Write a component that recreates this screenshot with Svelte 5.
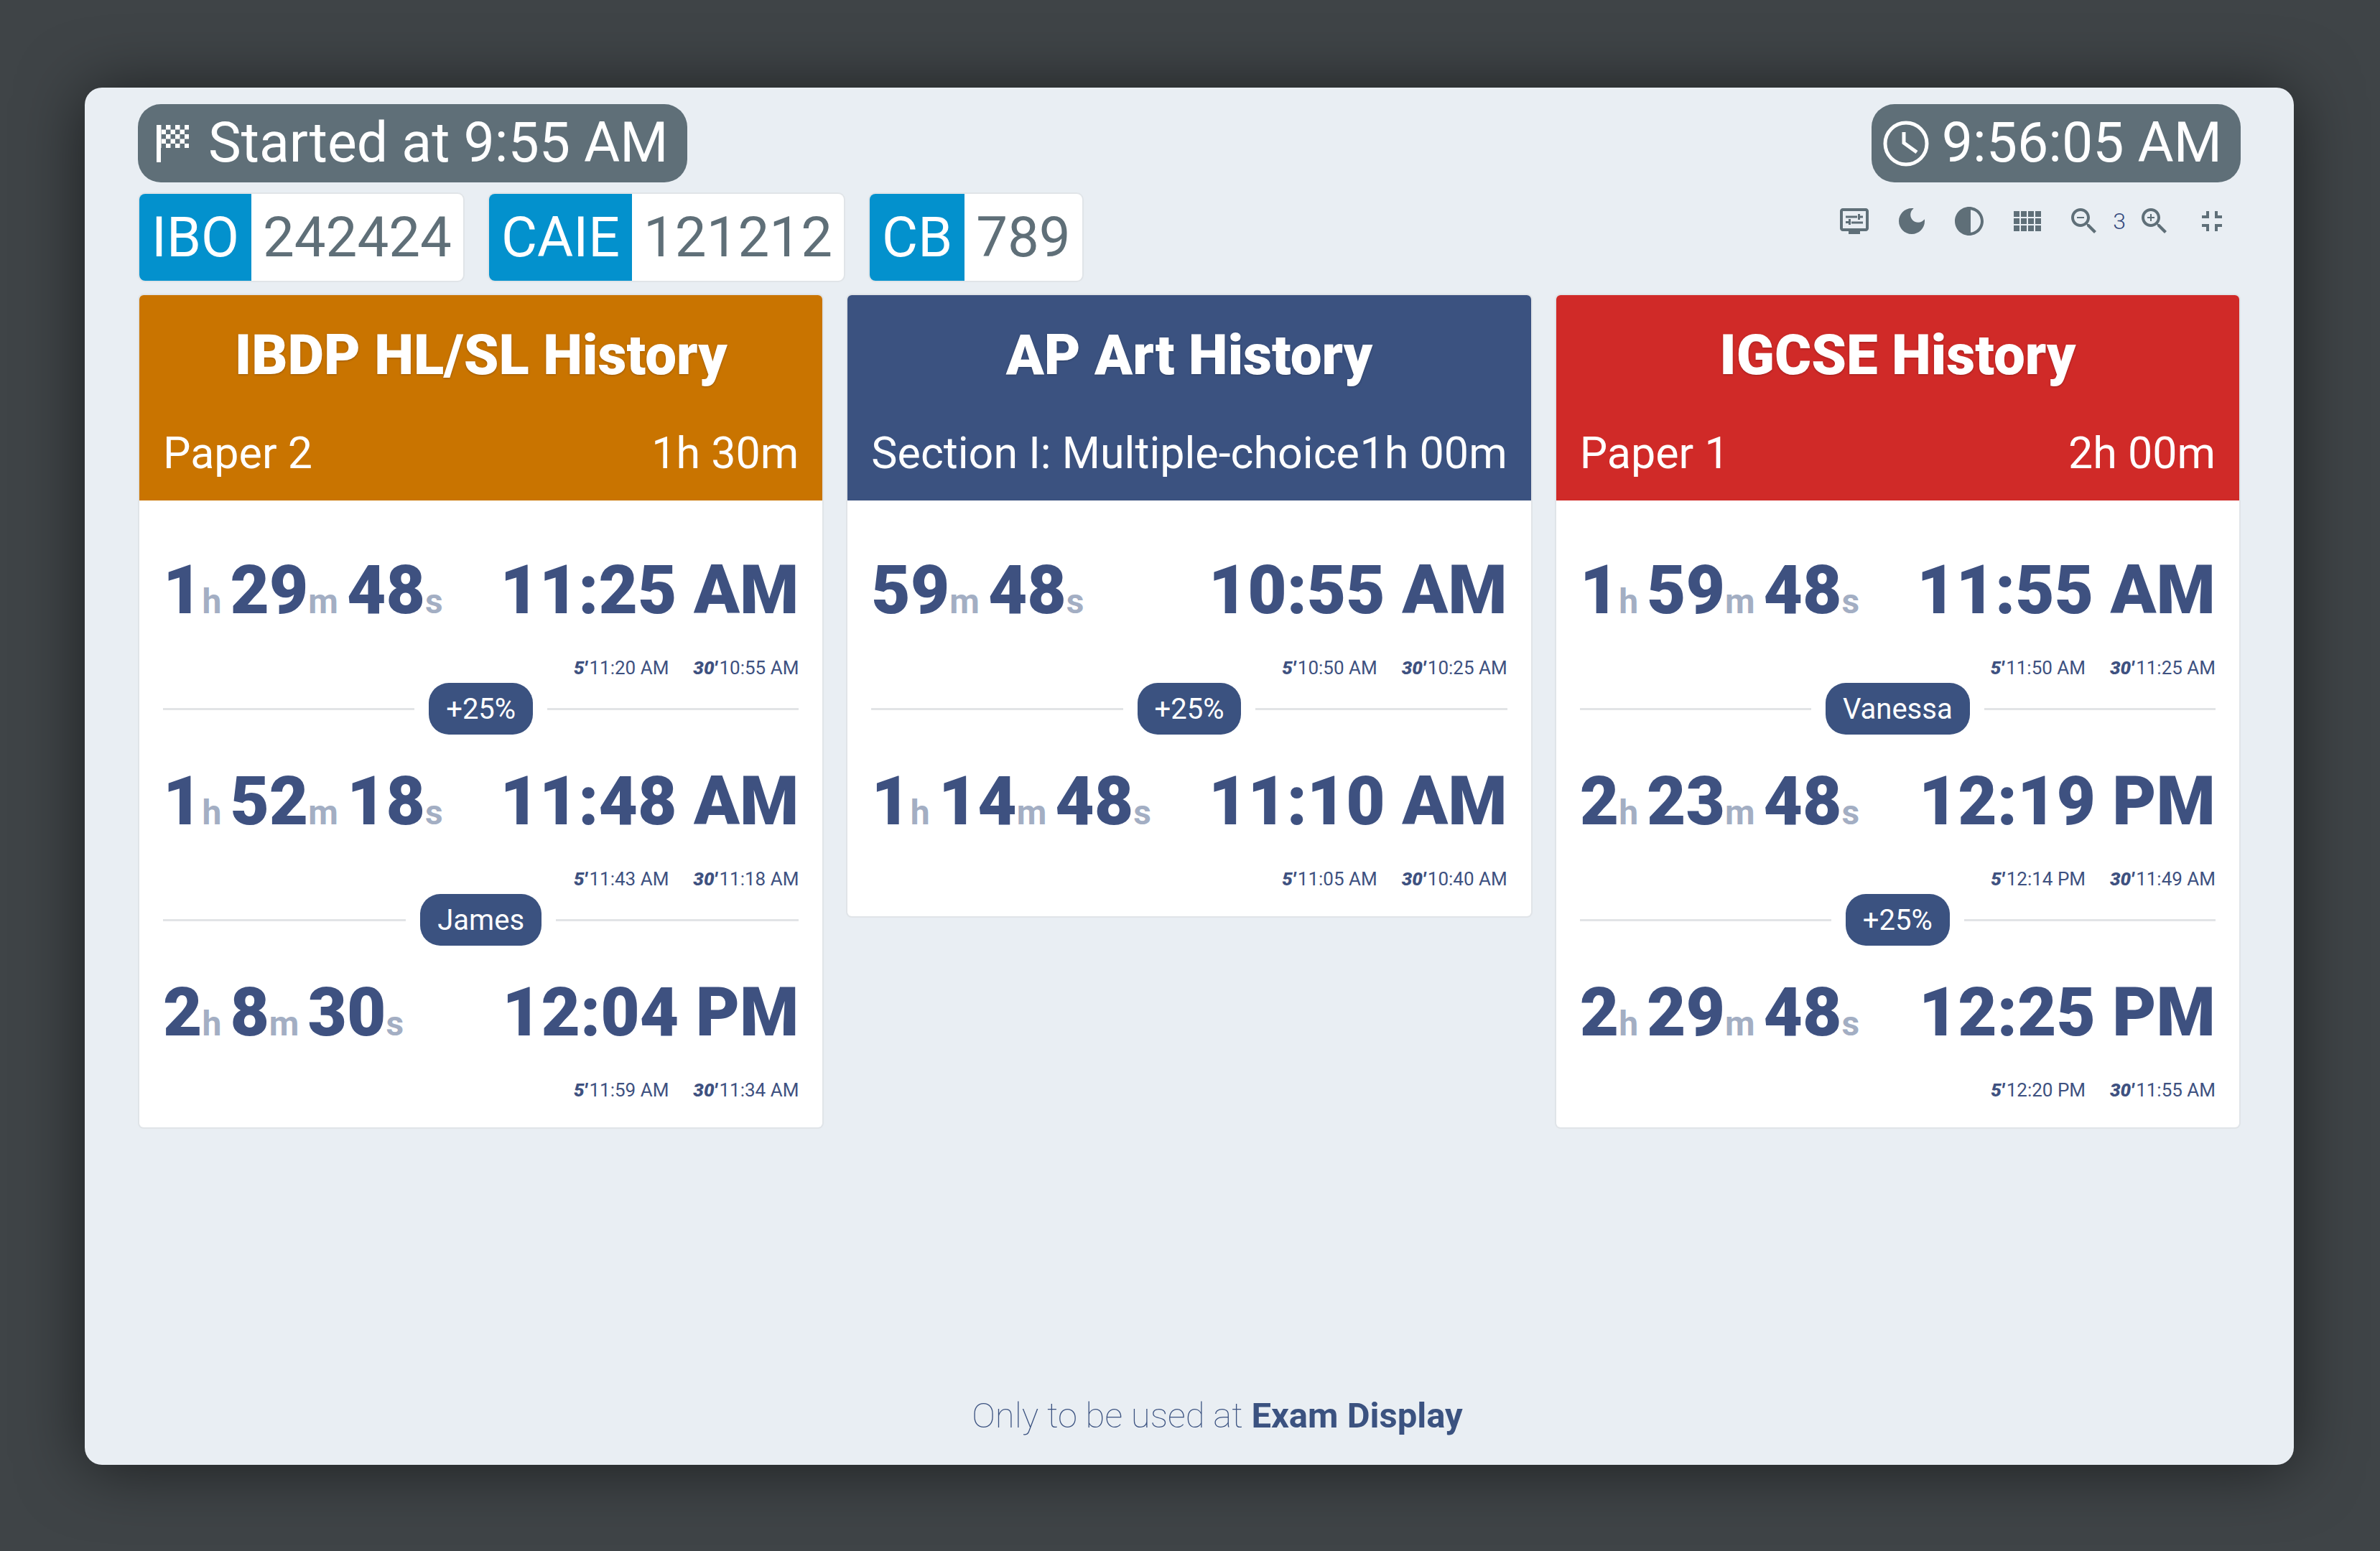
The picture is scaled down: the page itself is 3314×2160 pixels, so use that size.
<script>
  const cards = [
    {
      title: 'IBDP HL/SL History', paper: 'Paper 2', length: '1h 30m', color: '#c97400',
      rows: [
        { t: [['1', 'h'], ['29', 'm'], ['48', 's']], end: '11:25 AM', five: '11:20 AM', thirty: '10:55 AM', tag: '+25%' },
        { t: [['1', 'h'], ['52', 'm'], ['18', 's']], end: '11:48 AM', five: '11:43 AM', thirty: '11:18 AM', tag: 'James' },
        { t: [['2', 'h'], ['8', 'm'], ['30', 's']], end: '12:04 PM', five: '11:59 AM', thirty: '11:34 AM' }
      ]
    },
    {
      title: 'AP Art History', paper: 'Section I: Multiple-choice', length: '1h 00m', color: '#3b5280',
      rows: [
        { t: [['59', 'm'], ['48', 's']], end: '10:55 AM', five: '10:50 AM', thirty: '10:25 AM', tag: '+25%' },
        { t: [['1', 'h'], ['14', 'm'], ['48', 's']], end: '11:10 AM', five: '11:05 AM', thirty: '10:40 AM' }
      ]
    },
    {
      title: 'IGCSE History', paper: 'Paper 1', length: '2h 00m', color: '#d02a28',
      rows: [
        { t: [['1', 'h'], ['59', 'm'], ['48', 's']], end: '11:55 AM', five: '11:50 AM', thirty: '11:25 AM', tag: 'Vanessa' },
        { t: [['2', 'h'], ['23', 'm'], ['48', 's']], end: '12:19 PM', five: '12:14 PM', thirty: '11:49 AM', tag: '+25%' },
        { t: [['2', 'h'], ['29', 'm'], ['48', 's']], end: '12:25 PM', five: '12:20 PM', thirty: '11:55 AM' }
      ]
    }
  ];

  const codes = [
    { board: 'IBO', code: '242424' },
    { board: 'CAIE', code: '121212' },
    { board: 'CB', code: '789' }
  ];

  // material icon paths for the toolbar
  const icons = {
    display: 'M20,3H4C2.89,3,2,3.89,2,5v12c0,1.1,0.89,2,2,2h4v2h8v-2h4c1.1,0,2-0.9,2-2V5C22,3.89,21.1,3,20,3z M20,17H4V5h16V17z M6,8.25h8v1.5H6V8.25z M16,9.75h2v-1.5h-2V7h-1.5v4H16V9.75z M18,12.25h-8v1.5h8V12.25z M8,14.5h1.5v-4H8v1.5H6v1.5h2V14.5z',
    moon: 'M12,3c-4.97,0-9,4.03-9,9s4.03,9,9,9s9-4.03,9-9c0-0.46-0.04-0.92-0.1-1.36c-0.98,1.37-2.58,2.26-4.4,2.26c-2.98,0-5.4-2.42-5.4-5.4c0-1.81,0.89-3.42,2.26-4.4C12.92,3.04,12.46,3,12,3L12,3z',
    contrast: 'M12 22c5.52 0 10-4.48 10-10S17.52 2 12 2 2 6.48 2 12s4.48 10 10 10zm1-17.93c3.94.49 7 3.85 7 7.93s-3.05 7.44-7 7.93V4.07z',
    grid: 'M3 9h4V5H3v4zm0 5h4v-4H3v4zm5 0h4v-4H8v4zm5 0h4v-4h-4v4zM8 9h4V5H8v4zm5-4v4h4V5h-4zm5 9h4v-4h-4v4zM3 19h4v-4H3v4zm5 0h4v-4H8v4zm5 0h4v-4h-4v4zm5 0h4v-4h-4v4zm0-14v4h4V5h-4z',
    zoomOut: 'M15.5 14h-.79l-.28-.27C15.41 12.59 16 11.11 16 9.5 16 5.91 13.09 3 9.5 3S3 5.91 3 9.5 5.91 16 9.5 16c1.61 0 3.09-.59 4.23-1.57l.27.28v.79l5 4.99L20.49 19l-4.99-5zm-6 0C7.01 14 5 11.99 5 9.5S7.01 5 9.5 5 14 7.01 14 9.5 11.99 14 9.5 14zM7 9h5v1H7z',
    zoomIn: 'M15.5 14h-.79l-.28-.27C15.41 12.59 16 11.11 16 9.5 16 5.91 13.09 3 9.5 3S3 5.91 3 9.5 5.91 16 9.5 16c1.61 0 3.09-.59 4.23-1.57l.27.28v.79l5 4.99L20.49 19l-4.99-5zm-6 0C7.01 14 5 11.99 5 9.5S7.01 5 9.5 5 14 7.01 14 9.5 11.99 14 9.5 14zM12 10h-2v2H9v-2H7V9h2V7h1v2h2v1z',
    shrink: 'M5 16h3v3h2v-5H5v2zm3-8H5v2h5V5H8v3zm6 11h2v-3h3v-2h-5v5zm2-11V5h-2v5h5V8h-3z'
  };
</script>

<div class="page">
  <main class="window">
    <header class="top">
      <div class="top-left">
        <div class="pill">
          <svg class="flag" viewBox="0 0 46 52" width="46" height="52" fill="#fff">
            <defs>
              <pattern id="checks" width="13" height="13" patternUnits="userSpaceOnUse">
                <rect width="6.5" height="6.5" />
                <rect x="6.5" y="6.5" width="6.5" height="6.5" />
              </pattern>
            </defs>
            <rect width="6" height="52" />
            <rect x="6" width="39" height="32" fill="url(#checks)" />
          </svg>
          <span>Started at 9:55 AM</span>
        </div>
        <div class="codes">
          {#each codes as c}
            <div class="code"><span class="board">{c.board}</span><span class="num">{c.code}</span></div>
          {/each}
        </div>
      </div>
      <div class="top-right">
        <div class="pill clock-pill">
          <svg class="clock" viewBox="0 0 64 64" width="64" height="64" fill="none" stroke="#fff" stroke-width="5">
            <circle cx="32" cy="32" r="29" />
            <path d="M29 16v15l18 13" />
          </svg>
          <span>9:56:05 AM</span>
        </div>
        <div class="tools">
          <svg viewBox="0 0 24 24"><path d={icons.display} /></svg>
          <svg viewBox="0 0 24 24"><path d={icons.moon} /></svg>
          <svg viewBox="0 0 24 24"><path d={icons.contrast} /></svg>
          <svg viewBox="0 0 24 24"><path d={icons.grid} /></svg>
          <div class="zoomer">
            <svg viewBox="0 0 24 24"><path d={icons.zoomOut} /></svg>
            <span>3</span>
            <svg viewBox="0 0 24 24"><path d={icons.zoomIn} /></svg>
          </div>
          <svg viewBox="0 0 24 24"><path d={icons.shrink} /></svg>
        </div>
      </div>
    </header>

    <section class="cards">
      {#each cards as card}
        <article class="card">
          <div class="card-head" style="background: {card.color}">
            <h2>{card.title}</h2>
            <div class="sub"><span>{card.paper}</span><span>{card.length}</span></div>
          </div>
          <div class="card-body">
            {#each card.rows as row}
              <div class="big">
                <span class="left">
                  {#each row.t as [n, u]}
                    <span class="seg">{n}<small>{u}</small></span>
                  {/each}
                </span>
                <span>{row.end}</span>
              </div>
              <div class="warn">
                <span><b>5'</b>{row.five}</span>
                <span><b>30'</b>{row.thirty}</span>
              </div>
              {#if row.tag}
                <div class="sep"><span class="tag">{row.tag}</span></div>
              {/if}
            {/each}
          </div>
        </article>
      {/each}
    </section>

    <footer class="foot">Only to be used at <b>Exam Display</b></footer>
  </main>
</div>

<style>
  :global(body) {
    margin: 0;
    background: #3f4447;
  }

  .page {
    height: 2160px;
    box-sizing: border-box;
    padding: 122px 120px 120px 118px;
    font-family: Roboto, "Liberation Sans", sans-serif;
    overflow: hidden;
  }

  .window {
    height: 1918px;
    box-sizing: border-box;
    padding: 23px 76px 38px;
    display: flex;
    flex-direction: column;
    background: #e9eef3;
    border-radius: 24px;
    box-shadow: 0 4px 90px rgba(0, 0, 0, 0.55);
  }

  .top {
    display: flex;
    justify-content: space-between;
    align-items: flex-start;
  }

  .top-left {
    display: flex;
    flex-direction: column;
    gap: 16px;
    align-items: flex-start;
  }

  .top-right {
    display: flex;
    flex-direction: column;
    align-items: flex-end;
  }

  .pill {
    height: 109px;
    box-sizing: border-box;
    display: flex;
    align-items: center;
    gap: 26px;
    padding: 0 26px;
    margin-left: -2px;
    background: #5f6f78;
    color: #fff;
    border-radius: 32px;
    font-size: 77px;
    line-height: 1;
  }

  .clock-pill {
    margin: 0 -2px 0 0;
    gap: 18px;
    padding: 0 26px 0 16px;
  }

  .codes {
    display: flex;
    gap: 36px;
  }

  .code {
    height: 121px;
    display: flex;
    background: #fff;
    border-radius: 8px;
    overflow: hidden;
    font-size: 77px;
    box-shadow: 0 0 0 2px #e0e4e8;
  }

  .board {
    display: flex;
    align-items: center;
    padding: 0 17px;
    background: #0391cd;
    color: #fff;
  }

  .num {
    display: flex;
    align-items: center;
    padding: 0 16px;
    color: #5f6f78;
    font-size: 78px;
  }

  .tools {
    display: flex;
    align-items: center;
    gap: 32px;
    height: 48px;
    margin: 30px 14px 0 0;
  }

  .tools svg {
    width: 48px;
    height: 48px;
    fill: #5f6f78;
    display: block;
  }

  .zoomer {
    display: flex;
    align-items: center;
    gap: 14px;
  }

  .zoomer span {
    width: 22px;
    text-align: center;
    color: #34497d;
    font-size: 32px;
    font-weight: 300;
  }

  .cards {
    display: grid;
    grid-template-columns: repeat(3, 1fr);
    gap: 35px;
    align-items: start;
    margin-top: 20px;
  }

  .card {
    background: #fff;
    border-radius: 6px;
    box-shadow: 0 0 0 2px #e0e4e8;
    overflow: hidden;
  }

  .card-head {
    height: 286px;
    box-sizing: border-box;
    padding: 0 33px;
    color: #fff;
    overflow: hidden;
  }

  .card-head h2 {
    margin: 48px 0 0;
    text-align: center;
    font-size: 78px;
    font-weight: 900;
    line-height: 72px;
    text-shadow: 0 1px 3px rgba(0, 0, 0, 0.25);
  }

  .sub {
    display: flex;
    justify-content: space-between;
    margin-top: 64px;
    font-size: 61px;
    line-height: 72px;
    white-space: nowrap;
  }

  .card-body {
    padding: 69px 33px 37px;
    color: #3e5180;
  }

  .big {
    display: flex;
    justify-content: space-between;
    font-size: 94px;
    font-weight: 900;
    line-height: 112px;
    white-space: nowrap;
  }

  .left {
    display: flex;
    gap: 12px;
  }

  .seg small {
    font-size: 48px;
    font-weight: 700;
    line-height: 0;
    color: #a3aec3;
  }

  .warn {
    display: flex;
    justify-content: flex-end;
    gap: 34px;
    margin-top: 37px;
    font-size: 26px;
    line-height: 30px;
    font-weight: 400;
  }

  .warn b {
    font-style: italic;
    font-weight: 900;
    margin-right: 3px;
  }

  .sep {
    display: flex;
    align-items: center;
    gap: 20px;
    margin: 6px 0 37px;
  }

  .sep::before,
  .sep::after {
    content: "";
    flex: 1;
    height: 3px;
    background: #e2e4e6;
  }

  .tag {
    height: 72px;
    padding: 0 24px;
    display: flex;
    align-items: center;
    background: #3b5280;
    color: #fff;
    border-radius: 28px;
    font-size: 40px;
  }

  .foot {
    margin-top: auto;
    padding-left: 78px;
    text-align: center;
    font-size: 49px;
    line-height: 60px;
    font-weight: 100;
    color: #3b5280;
  }

  .foot b {
    font-weight: 700;
  }
</style>
